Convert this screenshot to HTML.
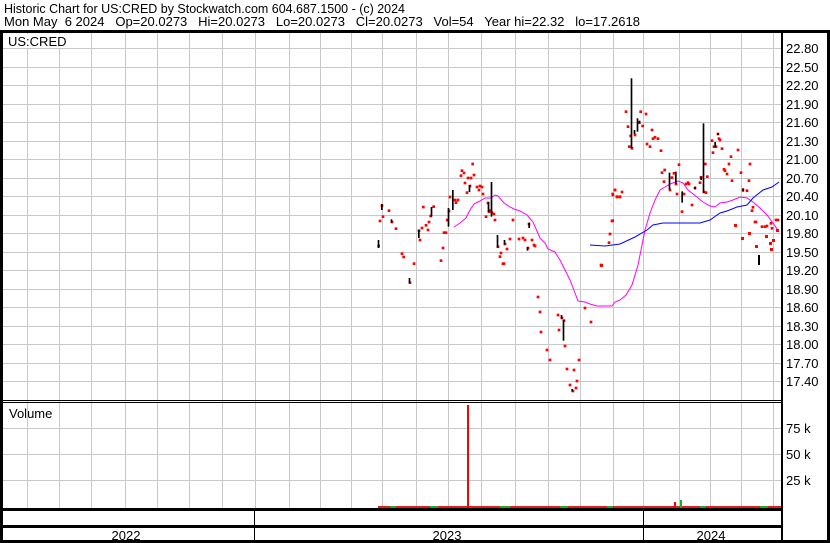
<!DOCTYPE html>
<html><head><meta charset="utf-8"><style>
html,body{margin:0;padding:0;background:#fff;width:830px;height:543px;overflow:hidden}
svg{display:block;font-family:"Liberation Sans",Arial,sans-serif}
</style></head><body>
<svg width="830" height="543" viewBox="0 0 830 543" xmlns="http://www.w3.org/2000/svg">
<rect width="830" height="543" fill="#fff"/>
<text x="4" y="13" font-size="13" textLength="401" lengthAdjust="spacingAndGlyphs">Historic Chart for US:CRED by Stockwatch.com 604.687.1500 - (c) 2024</text>
<text x="4" y="26" font-size="13" textLength="636" lengthAdjust="spacingAndGlyphs" xml:space="preserve">Mon May  6 2024   Op=20.0273   Hi=20.0273   Lo=20.0273   Cl=20.0273   Vol=54   Year hi=22.32   lo=17.2618</text>
<!-- grid -->
<g stroke="#c8c8c8" stroke-width="1">
<path d="M27.5 33V509M59.5 33V509M91.5 33V509M125.5 33V509M157.5 33V509M189.5 33V509M222.5 33V509M255.5 33V509M289.5 33V509M320.5 33V509M351.5 33V509M382.5 33V509M416.5 33V509M448.5 33V509M481.5 33V509M515.5 33V509M548.5 33V509M580.5 33V509M613.5 33V509M643.5 33V509M679.5 33V509M710.5 33V509M741.5 33V509M773.5 33V509"/>
<path d="M2 48.5H781M2 67.5H781M2 85.5H781M2 104.5H781M2 122.5H781M2 141.5H781M2 159.5H781M2 178.5H781M2 196.5H781M2 215.5H781M2 233.5H781M2 252.5H781M2 270.5H781M2 289.5H781M2 307.5H781M2 326.5H781M2 344.5H781M2 363.5H781M2 381.5H781"/>
<path d="M2 428.5H781M2 454.5H781M2 480.5H781"/>
</g>
<!-- white label areas -->
<rect x="2" y="34" width="80" height="14" fill="#fff"/>
<!-- borders -->
<g fill="#000">
<rect x="0" y="30" width="830" height="3"/>
<rect x="0" y="30" width="3" height="513"/>
<rect x="827" y="30" width="3" height="513"/>
<rect x="781" y="30" width="2" height="513"/>
<rect x="0" y="400" width="781" height="1"/>
<rect x="0" y="402" width="781" height="1"/>
<rect x="0" y="508" width="781" height="3"/>
<rect x="0" y="525" width="781" height="3"/>
<rect x="0" y="540" width="830" height="3"/>
<rect x="254" y="511" width="1" height="30"/>
<rect x="643" y="511" width="1" height="30"/>
</g>
<text x="8" y="46" font-size="13">US:CRED</text>
<text x="9" y="418" font-size="13">Volume</text>
<g font-size="13" text-anchor="middle">
<text x="126" y="540">2022</text><text x="447" y="540">2023</text><text x="711" y="540">2024</text>
</g>
<g font-size="13">
<text x="786" y="53">22.80</text><text x="786" y="72">22.50</text><text x="786" y="90">22.20</text><text x="786" y="109">21.90</text><text x="786" y="127">21.60</text><text x="786" y="146">21.30</text><text x="786" y="164">21.00</text><text x="786" y="183">20.70</text><text x="786" y="201">20.40</text><text x="786" y="220">20.10</text><text x="786" y="238">19.80</text><text x="786" y="257">19.50</text><text x="786" y="275">19.20</text><text x="786" y="294">18.90</text><text x="786" y="312">18.60</text><text x="786" y="331">18.30</text><text x="786" y="349">18.00</text><text x="786" y="368">17.70</text><text x="786" y="386">17.40</text>
<text x="786" y="433">75 k</text><text x="786" y="459">50 k</text><text x="786" y="485">25 k</text>
</g>
<!-- MAs -->
<polyline fill="none" stroke="#f0f" stroke-width="1" points="454,227 460,223 466,218 470,210 474,204 480,201 485,198 491,198 495,195 498,196 504,203 510,207 514,209 520,211 527,215 533,222 540,238 545,243 548,249 555,252 560,260 565,270 570,280 575,293 578,301 585,302 590,304 597,306 612,306 615,302 620,300 626,295 632,285 638,265 645,230 650,213 655,200 660,190 665,187 670,184 678,181 683,183 688,190 697,197 703,202 710,206 715,207 720,203 727,202 733,200 740,197 747,198 753,202 760,208 767,215 773,223 779,232"/>
<polyline fill="none" stroke="#00f" stroke-width="1" points="590,245 605,246 620,244 635,237 647,230 653,225 663,223 687,223 700,223 710,220 720,213 727,211 737,207 747,205 753,198 763,190 772,187 779,182"/>
<!-- zoom5 region data -->
<g transform="translate(360,160) scale(0.33333)">
<g fill="#f00">
<rect x="62" y="133" width="8" height="8"/><rect x="56" y="179" width="8" height="8"/><rect x="65" y="166" width="8" height="8"/><rect x="52" y="254" width="8" height="8"/><rect x="83" y="148" width="8" height="8"/><rect x="92" y="182" width="8" height="8"/><rect x="104" y="202" width="8" height="8"/><rect x="122" y="277" width="8" height="8"/><rect x="127" y="287" width="8" height="8"/><rect x="146" y="364" width="8" height="8"/><rect x="158" y="307" width="8" height="8"/><rect x="176" y="236" width="8" height="8"/><rect x="173" y="208" width="8" height="8"/><rect x="182" y="200" width="8" height="8"/><rect x="186" y="137" width="8" height="8"/><rect x="194" y="192" width="8" height="8"/><rect x="200" y="206" width="8" height="8"/><rect x="203" y="182" width="8" height="8"/><rect x="208" y="164" width="8" height="8"/><rect x="217" y="136" width="8" height="8"/><rect x="239" y="298" width="8" height="8"/><rect x="245" y="260" width="8" height="8"/><rect x="248" y="214" width="8" height="8"/><rect x="254" y="214" width="8" height="8"/><rect x="258" y="176" width="8" height="8"/><rect x="263" y="149" width="8" height="8"/><rect x="266" y="107" width="8" height="8"/><rect x="281" y="116" width="8" height="8"/><rect x="284" y="124" width="8" height="8"/><rect x="290" y="116" width="8" height="8"/><rect x="299" y="43" width="8" height="8"/><rect x="302" y="28" width="8" height="8"/><rect x="308" y="35" width="8" height="8"/><rect x="311" y="65" width="8" height="8"/><rect x="317" y="94" width="8" height="8"/><rect x="320" y="50" width="8" height="8"/><rect x="326" y="74" width="8" height="8"/><rect x="329" y="50" width="8" height="8"/><rect x="334" y="8" width="8" height="8"/><rect x="338" y="41" width="8" height="8"/><rect x="347" y="77" width="8" height="8"/><rect x="353" y="86" width="8" height="8"/><rect x="356" y="74" width="8" height="8"/><rect x="362" y="77" width="8" height="8"/><rect x="365" y="98" width="8" height="8"/><rect x="374" y="166" width="8" height="8"/><rect x="380" y="125" width="8" height="8"/><rect x="383" y="151" width="8" height="8"/><rect x="386" y="148" width="8" height="8"/><rect x="392" y="154" width="8" height="8"/><rect x="398" y="158" width="8" height="8"/><rect x="401" y="176" width="8" height="8"/><rect x="410" y="256" width="8" height="8"/><rect x="416" y="286" width="8" height="8"/><rect x="419" y="275" width="8" height="8"/><rect x="425" y="307" width="8" height="8"/><rect x="428" y="307" width="8" height="8"/><rect x="431" y="248" width="8" height="8"/><rect x="437" y="263" width="8" height="8"/><rect x="446" y="233" width="8" height="8"/><rect x="455" y="176" width="8" height="8"/><rect x="473" y="233" width="8" height="8"/><rect x="485" y="230" width="8" height="8"/><rect x="491" y="236" width="8" height="8"/><rect x="503" y="188" width="8" height="8"/><rect x="500" y="260" width="8" height="8"/><rect x="512" y="236" width="8" height="8"/><rect x="518" y="251" width="8" height="8"/><rect x="521" y="254" width="8" height="8"/><rect x="530" y="407" width="8" height="8"/><rect x="536" y="452" width="8" height="8"/><rect x="539" y="512" width="8" height="8"/><rect x="557" y="566" width="8" height="8"/><rect x="566" y="596" width="8" height="8"/><rect x="590" y="461" width="8" height="8"/><rect x="593" y="506" width="8" height="8"/><rect x="602" y="470" width="8" height="8"/><rect x="608" y="478" width="8" height="8"/><rect x="611" y="554" width="8" height="8"/><rect x="617" y="623" width="8" height="8"/><rect x="626" y="671" width="8" height="8"/><rect x="635" y="689" width="8" height="8"/><rect x="638" y="626" width="8" height="8"/><rect x="644" y="680" width="8" height="8"/><rect x="647" y="659" width="8" height="8"/><rect x="653" y="596" width="8" height="8"/><rect x="671" y="440" width="8" height="8"/><rect x="689" y="482" width="8" height="8"/><rect x="719" y="311" width="8" height="8"/><rect x="743" y="244" width="8" height="8"/><rect x="746" y="218" width="8" height="8"/><rect x="752" y="179" width="8" height="8"/><rect x="755" y="101" width="8" height="8"/><rect x="761" y="86" width="8" height="8"/><rect x="767" y="107" width="8" height="8"/><rect x="776" y="107" width="8" height="8"/>
</g>
<g fill="#000">
<rect x="63" y="132" width="5" height="18"/><rect x="53" y="240" width="5" height="24"/><rect x="92" y="178" width="5" height="10"/><rect x="146" y="354" width="5" height="16"/><rect x="174" y="210" width="5" height="24"/><rect x="212" y="141" width="5" height="29"/><rect x="263" y="144" width="5" height="56"/><rect x="276" y="90" width="5" height="60"/><rect x="326" y="75" width="5" height="21"/><rect x="383" y="126" width="5" height="30"/><rect x="392" y="66" width="5" height="104"/><rect x="410" y="225" width="5" height="38"/><rect x="431" y="240" width="5" height="14"/><rect x="500" y="261" width="5" height="11"/><rect x="505" y="188" width="5" height="16"/><rect x="608" y="480" width="5" height="62"/><rect x="602" y="465" width="5" height="11"/><rect x="634" y="687" width="5" height="8"/>
</g>
</g>
<!-- zoom2 region data -->
<g transform="translate(600,30) scale(0.33333)">
<g fill="#f00">
<rect x="74" y="241" width="8" height="8"/><rect x="80" y="286" width="8" height="8"/><rect x="84" y="346" width="8" height="8"/><rect x="92" y="351" width="8" height="8"/><rect x="88" y="314" width="8" height="8"/><rect x="101" y="311" width="8" height="8"/><rect x="114" y="274" width="8" height="8"/><rect x="118" y="241" width="8" height="8"/><rect x="124" y="284" width="8" height="8"/><rect x="134" y="248" width="8" height="8"/><rect x="137" y="338" width="8" height="8"/><rect x="146" y="346" width="8" height="8"/><rect x="152" y="296" width="8" height="8"/><rect x="155" y="322" width="8" height="8"/><rect x="161" y="318" width="8" height="8"/><rect x="170" y="322" width="8" height="8"/><rect x="179" y="358" width="8" height="8"/><rect x="182" y="424" width="8" height="8"/><rect x="188" y="451" width="8" height="8"/><rect x="190" y="416" width="8" height="8"/><rect x="206" y="476" width="8" height="8"/><rect x="212" y="439" width="8" height="8"/><rect x="218" y="426" width="8" height="8"/><rect x="224" y="458" width="8" height="8"/><rect x="233" y="400" width="8" height="8"/><rect x="227" y="488" width="8" height="8"/><rect x="242" y="541" width="8" height="8"/><rect x="248" y="488" width="8" height="8"/><rect x="254" y="458" width="8" height="8"/><rect x="260" y="454" width="8" height="8"/><rect x="263" y="458" width="8" height="8"/><rect x="272" y="521" width="8" height="8"/><rect x="281" y="470" width="8" height="8"/><rect x="296" y="454" width="8" height="8"/><rect x="299" y="438" width="8" height="8"/><rect x="308" y="482" width="8" height="8"/><rect x="314" y="484" width="8" height="8"/><rect x="312" y="398" width="8" height="8"/><rect x="318" y="436" width="8" height="8"/><rect x="332" y="328" width="8" height="8"/><rect x="335" y="364" width="8" height="8"/><rect x="338" y="346" width="8" height="8"/><rect x="344" y="346" width="8" height="8"/><rect x="350" y="308" width="8" height="8"/><rect x="353" y="322" width="8" height="8"/><rect x="356" y="326" width="8" height="8"/><rect x="362" y="352" width="8" height="8"/><rect x="368" y="414" width="8" height="8"/><rect x="371" y="418" width="8" height="8"/><rect x="377" y="428" width="8" height="8"/><rect x="383" y="398" width="8" height="8"/><rect x="389" y="376" width="8" height="8"/><rect x="392" y="448" width="8" height="8"/><rect x="410" y="356" width="8" height="8"/><rect x="419" y="424" width="8" height="8"/><rect x="425" y="476" width="8" height="8"/><rect x="437" y="478" width="8" height="8"/><rect x="443" y="448" width="8" height="8"/><rect x="446" y="398" width="8" height="8"/><rect x="452" y="538" width="8" height="8"/><rect x="455" y="528" width="8" height="8"/><rect x="461" y="572" width="8" height="8"/><rect x="464" y="572" width="8" height="8"/><rect x="482" y="586" width="8" height="8"/><rect x="491" y="586" width="8" height="8"/><rect x="497" y="584" width="8" height="8"/><rect x="509" y="576" width="8" height="8"/><rect x="512" y="591" width="8" height="8"/><rect x="524" y="566" width="8" height="8"/><rect x="530" y="566" width="8" height="8"/><rect x="34" y="568" width="8" height="8"/><rect x="34" y="488" width="8" height="8"/><rect x="41" y="476" width="8" height="8"/><rect x="47" y="496" width="8" height="8"/><rect x="56" y="496" width="8" height="8"/><rect x="62" y="482" width="8" height="8"/>
</g>
<g fill="#000">
<rect x="92" y="145" width="5" height="210"/><rect x="101" y="300" width="5" height="12"/><rect x="110" y="265" width="5" height="40"/><rect x="116" y="272" width="5" height="8"/><rect x="206" y="428" width="5" height="50"/><rect x="225" y="425" width="5" height="37"/><rect x="244" y="484" width="5" height="34"/><rect x="283" y="470" width="5" height="8"/><rect x="301" y="440" width="5" height="10"/><rect x="308" y="280" width="5" height="208"/><rect x="343" y="336" width="5" height="16"/><rect x="351" y="310" width="5" height="5"/><rect x="427" y="475" width="5" height="10"/>
</g>
</g>
<!-- extra dots lower right -->
<g fill="#f00">
<rect x="734" y="224" width="3" height="3"/><rect x="741" y="237" width="3" height="3"/><rect x="748" y="232" width="3" height="3"/><rect x="755" y="245" width="3" height="3"/><rect x="765" y="235" width="3" height="3"/><rect x="769" y="242" width="3" height="3"/><rect x="772" y="239" width="3" height="3"/><rect x="776" y="229" width="3" height="3"/><rect x="770" y="248" width="3" height="3"/><rect x="600" y="264" width="3" height="3"/>
</g>
<rect x="758" y="255" width="2" height="10" fill="#000"/>
<!-- volume -->
<rect x="378" y="506" width="403" height="2" fill="#e02020"/>
<g fill="#2a2">
<rect x="390" y="506" width="6" height="2"/><rect x="430" y="506" width="8" height="2"/><rect x="500" y="506" width="10" height="2"/><rect x="560" y="506" width="8" height="2"/><rect x="607" y="506" width="6" height="2"/><rect x="680" y="500" width="2" height="8"/><rect x="700" y="506" width="6" height="2"/><rect x="760" y="506" width="8" height="2"/>
</g>
<rect x="467" y="405" width="2" height="103" fill="#f00"/>
<rect x="674" y="502" width="2" height="6" fill="#f00"/>
</svg>
</body></html>
